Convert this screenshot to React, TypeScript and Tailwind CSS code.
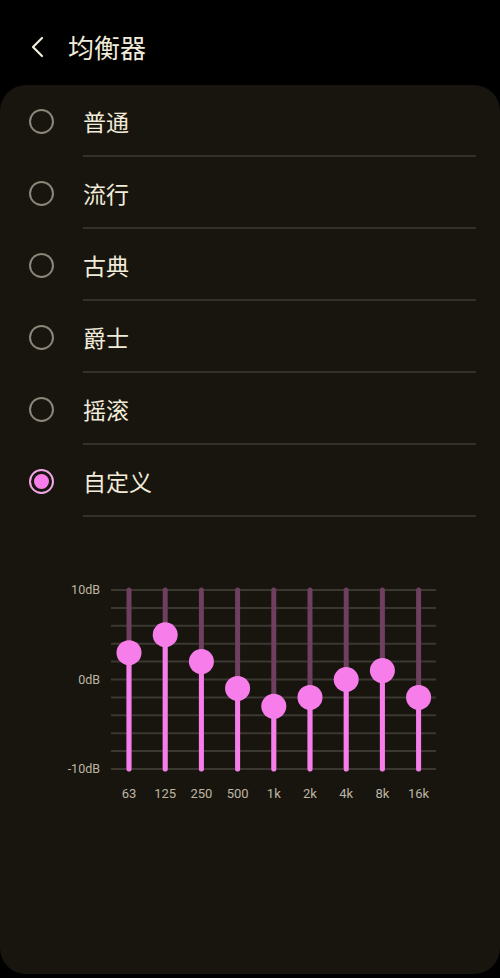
const presets = ["普通", "流行", "古典", "爵士", "摇滚", "自定义"];
const selected = 5;

const bands = [
  { label: "63", db: 3 },
  { label: "125", db: 5 },
  { label: "250", db: 2 },
  { label: "500", db: -1 },
  { label: "1k", db: -3 },
  { label: "2k", db: -2 },
  { label: "4k", db: 0 },
  { label: "8k", db: 1 },
  { label: "16k", db: -2 },
];

function Radio({ on }: { on: boolean }) {
  if (on) {
    return (
      <span className="flex h-[25px] w-[25px] items-center justify-center rounded-full border-2 border-[#f2a6e6]">
        <span className="h-[15px] w-[15px] rounded-full bg-[#f77eea]" />
      </span>
    );
  }
  return <span className="h-[25px] w-[25px] rounded-full border-2 border-[#8b857a]" />;
}

function EqChart() {
  // top line = +10dB, bottom line = -10dB
  const top = 20;
  const bottom = 199;
  const mid = (top + bottom) / 2;
  const step = (bottom - top) / 20;
  const lines = Array.from({ length: 11 }, (_, i) => top + ((bottom - top) / 10) * i);
  return (
    <svg width="500" height="240" viewBox="0 0 500 240" className="block">
      {lines.map((y) => (
        <line key={y} x1="111" x2="436" y1={y} y2={y} stroke="#3b3731" strokeWidth="2" />
      ))}
      <g fill="#bdb5a3" fontSize="12.5" fontFamily="Roboto, 'Liberation Sans', sans-serif">
        <text x="100" y={top + 4} textAnchor="end">10dB</text>
        <text x="100" y={mid + 4} textAnchor="end">0dB</text>
        <text x="100" y={bottom + 4} textAnchor="end">-10dB</text>
      </g>
      {bands.map((b, i) => {
        const x = 129 + i * 36.2;
        const ky = mid - b.db * step;
        return (
          <g key={b.label}>
            <line x1={x} x2={x} y1={top} y2={bottom} stroke="#6e3f5e" strokeWidth="5" strokeLinecap="round" />
            <line x1={x} x2={x} y1={ky} y2={bottom} stroke="#f77eea" strokeWidth="5" strokeLinecap="round" />
            <circle cx={x} cy={ky} r="12.5" fill="#f77eea" />
            <text
              x={x}
              y={228}
              textAnchor="middle"
              fill="#bdb5a3"
              fontSize="13"
              fontFamily="Roboto, 'Liberation Sans', sans-serif"
            >
              {b.label}
            </text>
          </g>
        );
      })}
    </svg>
  );
}

export default function App() {
  return (
    <div
      className="flex h-[978px] w-[500px] flex-col bg-black text-[#f1ebda]"
      style={{ fontFamily: "'Noto Sans CJK SC', 'Noto Sans', sans-serif" }}
    >
      <header className="flex h-[85px] shrink-0 items-center pt-[8px]">
        <svg width="18" height="24" viewBox="0 0 18 24" className="ml-[29px]" fill="none">
          <path d="M13 3 L4 12 L13 21" stroke="#f1ebda" strokeWidth="2.2" strokeLinecap="round" strokeLinejoin="round" />
        </svg>
        <h1 className="ml-[21px] text-[26px] leading-none">均衡器</h1>
      </header>
      <main className="mb-[4px] flex-1 rounded-[26px] bg-[#18150f]">
        <ul>
          {presets.map((p, i) => (
            <li key={p} className="flex h-[72px] items-center">
              <span className="flex w-[83px] justify-center pr-[1px]">
                <Radio on={i === selected} />
              </span>
              <span className="mr-[24px] flex h-full flex-1 items-center border-b-2 border-[#34302a] pt-[2px] text-[23px]">
                {p}
              </span>
            </li>
          ))}
        </ul>
        <div className="mt-[53px]">
          <EqChart />
        </div>
      </main>
    </div>
  );
}
